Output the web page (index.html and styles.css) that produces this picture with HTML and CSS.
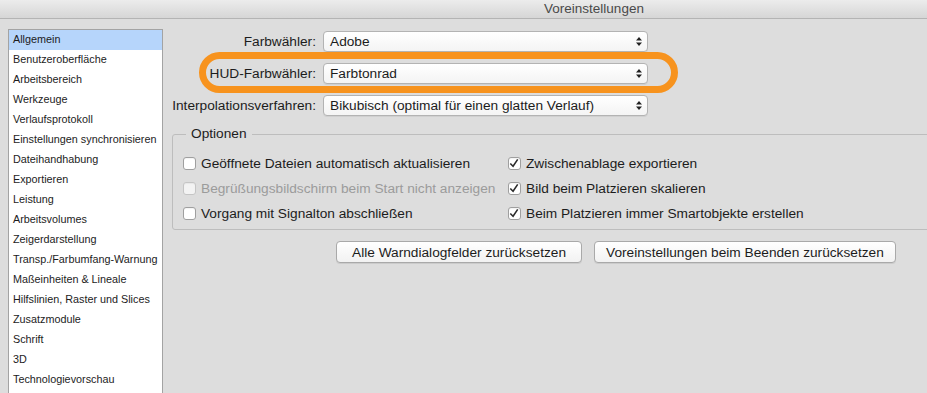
FILE: index.html
```html
<!DOCTYPE html>
<html lang="de">
<head>
  <meta charset="UTF-8" />
  <meta name="viewport" content="width=device-width, initial-scale=1.0" />
  <title>Voreinstellungen</title>
  <link rel="stylesheet" href="styles.css">
</head>
<body>
  <!-- Window title -->
  <div class="titlebar">Voreinstellungen</div>

  <div class="window">
    <!-- Category list -->
    <ul class="nav">
      <li class="selected">Allgemein</li>
      <li>Benutzeroberfläche</li>
      <li>Arbeitsbereich</li>
      <li>Werkzeuge</li>
      <li>Verlaufsprotokoll</li>
      <li>Einstellungen synchronisieren</li>
      <li>Dateihandhabung</li>
      <li>Exportieren</li>
      <li>Leistung</li>
      <li>Arbeitsvolumes</li>
      <li>Zeigerdarstellung</li>
      <li>Transp./Farbumfang-Warnung</li>
      <li>Maßeinheiten &amp; Lineale</li>
      <li>Hilfslinien, Raster und Slices</li>
      <li>Zusatzmodule</li>
      <li>Schrift</li>
      <li>3D</li>
      <li>Technologievorschau</li>
    </ul>

    <div class="panel">
      <!-- Picker settings -->
      <div class="form">
        <label>Farbwähler:</label>
        <div class="select">Adobe <svg class="arrows" width="6" height="9" viewBox="0 0 6 9"><path d="M0 3.5 L3 0 L6 3.5 Z M0 5.5 L3 9 L6 5.5 Z" fill="#222"/></svg></div>

        <label>HUD-Farbwähler:</label>
        <div class="select">Farbtonrad <svg class="arrows" width="6" height="9" viewBox="0 0 6 9"><path d="M0 3.5 L3 0 L6 3.5 Z M0 5.5 L3 9 L6 5.5 Z" fill="#222"/></svg></div>

        <label>Interpolationsverfahren:</label>
        <div class="select">Bikubisch (optimal für einen glatten Verlauf) <svg class="arrows" width="6" height="9" viewBox="0 0 6 9"><path d="M0 3.5 L3 0 L6 3.5 Z M0 5.5 L3 9 L6 5.5 Z" fill="#222"/></svg></div>

        <!-- highlight marker -->
        <div class="ring"></div>
      </div>

      <!-- Options group -->
      <fieldset class="options">
        <legend>Optionen</legend>
        <div class="check-grid">
          <div class="check"><span class="box"></span>Geöffnete Dateien automatisch aktualisieren</div>
          <div class="check"><span class="box"><svg width="13" height="13" viewBox="0 0 13 13"><path d="M2.5 6.5 L5.5 9.5 L10.5 2" fill="none" stroke="#2b2b2b" stroke-width="1.7"/></svg></span>Zwischenablage exportieren</div>

          <div class="check disabled"><span class="box"></span>Begrüßungsbildschirm beim Start nicht anzeigen</div>
          <div class="check"><span class="box"><svg width="13" height="13" viewBox="0 0 13 13"><path d="M2.5 6.5 L5.5 9.5 L10.5 2" fill="none" stroke="#2b2b2b" stroke-width="1.7"/></svg></span>Bild beim Platzieren skalieren</div>

          <div class="check"><span class="box"></span>Vorgang mit Signalton abschließen</div>
          <div class="check"><span class="box"><svg width="13" height="13" viewBox="0 0 13 13"><path d="M2.5 6.5 L5.5 9.5 L10.5 2" fill="none" stroke="#2b2b2b" stroke-width="1.7"/></svg></span>Beim Platzieren immer Smartobjekte erstellen</div>
        </div>
      </fieldset>

      <div class="buttons">
        <button>Alle Warndialogfelder zurücksetzen</button>
        <button class="narrow">Voreinstellungen beim Beenden zurücksetzen</button>
      </div>
    </div>
  </div>
</body>
</html>
```

FILE: styles.css
```css
:root {
  --bg-color: #dddddd;
  --text-color: #1c1c1c;
  --border-color: #ababab;
  --highlight: #f7931e;
  --selected: #b6d5fb;
}
* {
  margin: 0;
  padding: 0;
  box-sizing: border-box;
  font-family: 'Liberation Sans', Arial, sans-serif;
}
body {
  background-color: var(--bg-color);
  color: var(--text-color);
  width: 927px;
  height: 393px;
  overflow: hidden;
  font-size: 13.7px;
}
.titlebar {
  height: 19px;
  line-height: 18px;
  padding-left: 261px; /* window is wider than the shot, title sits off-centre */
  text-align: center;
  font-size: 13.5px;
  color: #4a4a4a;
  background: linear-gradient(#ececec, #d6d6d6);
  border-bottom: 1px solid #b4b4b4;
}
.window {
  display: flex;
  align-items: flex-start;
}
/* Sidebar list */
.nav {
  list-style: none;
  width: 155px;
  height: 370px;
  margin: 10px 0 0 8px;
  background-color: white;
  border: 1px solid #a3a3a3;
  border-bottom: none;
  flex-shrink: 0;
}
.nav li {
  height: 20px;
  line-height: 19px;
  padding-left: 4px;
  font-size: 10.8px;
  white-space: nowrap;
}
.nav li.selected {
  background-color: var(--selected);
}
.panel {
  flex: 1;
  padding: 12px 0 0 9px;
}
/* Dropdown rows */
.form {
  position: relative;
  display: grid;
  grid-template-columns: 144px 325px;
  grid-auto-rows: 21px;
  column-gap: 7px;
  row-gap: 11px;
}
.form label {
  text-align: right;
  line-height: 21px;
  white-space: nowrap;
}
.select {
  position: relative;
  line-height: 19px;
  padding-left: 6px;
  background: linear-gradient(#ffffff, #f4f4f4);
  border: 1px solid #b3b3b3;
  border-radius: 4px;
  box-shadow: 0 1px 0 rgba(0, 0, 0, 0.06);
  white-space: nowrap;
}
.select .arrows {
  position: absolute;
  right: 5px;
  top: 5px;
}
.ring {
  position: absolute;
  top: 21px;
  left: 27px;
  width: 479px;
  height: 41px;
  border: 7px solid var(--highlight);
  border-radius: 21px;
  pointer-events: none;
}
/* Options group */
.options {
  margin: 10px -14px 0 0;
  padding: 0 0 3px 10px;
  border: 1px solid #bdbdbd;
  border-radius: 3px;
}
.options legend {
  margin-left: 3px;
  padding: 0 5px;
  line-height: 16px;
}
.check-grid {
  display: grid;
  grid-template-columns: 325px 1fr;
  grid-auto-rows: 25px;
  padding-top: 9px;
}
.check {
  display: flex;
  align-items: center;
  gap: 5px;
  white-space: nowrap;
}
.check .box {
  width: 13px;
  height: 13px;
  flex-shrink: 0;
  display: flex;
  background-color: white;
  border: 1px solid #9f9f9f;
  border-radius: 3px;
  box-shadow: inset 0 1px 1px rgba(0, 0, 0, 0.05);
}
.check .box svg {
  margin: -1px 0 0 -1px;
}
.check.disabled {
  color: #9b9b9b;
}
.check.disabled .box {
  border-color: #c5c5c5;
  background-color: #f3f3f3;
}
/* Bottom buttons */
.buttons {
  display: flex;
  gap: 12px;
  margin-top: 11px;
  padding-left: 164px;
}
button {
  height: 22px;
  padding: 0 15px;
  font-size: 13.7px;
  color: var(--text-color);
  background: linear-gradient(#ffffff, #f2f2f2);
  border: 1px solid #a9a9a9;
  border-radius: 4px;
  box-shadow: 0 1px 0 rgba(0, 0, 0, 0.08);
}
button.narrow {
  padding: 0 11px;
}
```
